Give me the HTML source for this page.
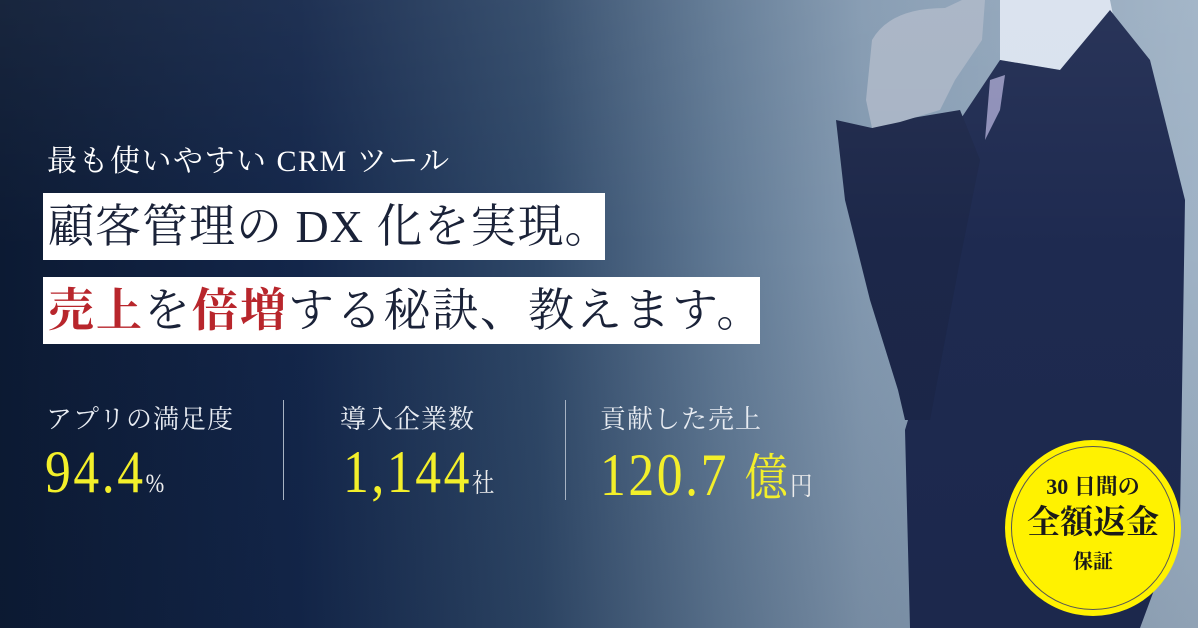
<!DOCTYPE html>
<html><head><meta charset="utf-8"><style>
*{margin:0;padding:0;box-sizing:border-box}
body{width:1198px;height:628px;overflow:hidden;position:relative;font-family:"Liberation Serif","Noto Serif CJK JP","Noto Serif CJK SC",serif;
background:linear-gradient(90deg,#0c1a33 0%,#13264a 25%,#2f4868 45%,#5f7893 60%,#8399b0 72%,#9fb2c5 100%);}
.ov{position:absolute;inset:0;background:linear-gradient(180deg,rgba(255,255,255,0.05),rgba(0,0,0,0) 40%,rgba(10,20,40,0.1))}
.t{position:absolute;color:#fff;white-space:nowrap}
.box{position:absolute;background:#fff;color:#1a2238;white-space:nowrap;font-size:46px;line-height:67px;padding-left:5px;letter-spacing:2px}
.red{color:#b8262c;font-weight:bold}
.lab{position:absolute;top:399px;color:#e8ecf2;font-size:26px;letter-spacing:1px}
.num{position:absolute;top:438px;color:#f3ef2a;font-size:60px;letter-spacing:3px;transform:scaleX(0.86);transform-origin:left top;white-space:nowrap}
.num small{font-size:26px;color:#eee;letter-spacing:0}
.num .k{font-size:50px}
.div{position:absolute;top:400px;width:1px;height:100px;background:#a7b3c3}
.badge{position:absolute;left:1005px;top:440px;width:176px;height:176px;border-radius:50%;background:#fff200;text-align:center;color:#1a1a1a}
.badge:after{content:"";position:absolute;inset:6px;border:1px solid #555;border-radius:50%}
</style></head><body>
<svg style="position:absolute;left:0;top:0" width="1198" height="628">
<path d="M1000 0 L1110 0 L1115 25 L1060 70 L1000 60 Z" fill="#d9e2ee"/>
<path d="M1110 10 L1150 60 L1185 200 L1180 520 L1140 628 L910 628 L905 430 L920 380 L960 120 L1000 60 L1060 70 Z" fill="#1e2a50"/>
<path d="M836 120 L872 128 L900 120 L960 110 L980 160 L960 260 L930 420 L905 420 L898 390 L870 300 L845 200 Z" fill="#1c2749"/>
<path d="M872 40 Q890 8 945 8 L962 0 L985 0 L982 40 L955 80 L940 110 L900 122 L872 128 L866 100 Z" fill="#a7b3c4"/>
<path d="M990 80 L1005 75 L1000 110 L985 140 Z" fill="#8e8fb8"/>
</svg>
<div class="ov"></div>
<div class="t" style="left:47px;top:136px;font-size:30px;letter-spacing:1.5px">最も使いやすい CRM ツール</div>
<div class="box" style="left:43px;top:193px;width:562px;height:67px;letter-spacing:1px">顧客管理の DX 化を実現。</div>
<div class="box" style="left:43px;top:277px;width:717px;height:67px"><span class="red">売上</span>を<span class="red">倍増</span>する秘訣、教えます。</div>
<div class="lab" style="left:46px">アプリの満足度</div>
<div class="lab" style="left:340px">導入企業数</div>
<div class="lab" style="left:600px">貢献した売上</div>
<div class="div" style="left:283px"></div>
<div class="div" style="left:565px"></div>
<div class="num" style="left:45px">94.4<small>%</small></div>
<div class="num" style="left:343px">1,144<small>社</small></div>
<div class="num" style="left:600px">120.7 <span class="k">億</span><small>円</small></div>
<div class="badge">
<div style="margin-top:30px;font-size:22px;font-weight:bold">30 日間の</div>
<div style="font-size:33px;font-weight:bold;line-height:44px">全額返金</div>
<div style="font-size:20px;font-weight:bold">保証</div>
</div>
</body></html>
